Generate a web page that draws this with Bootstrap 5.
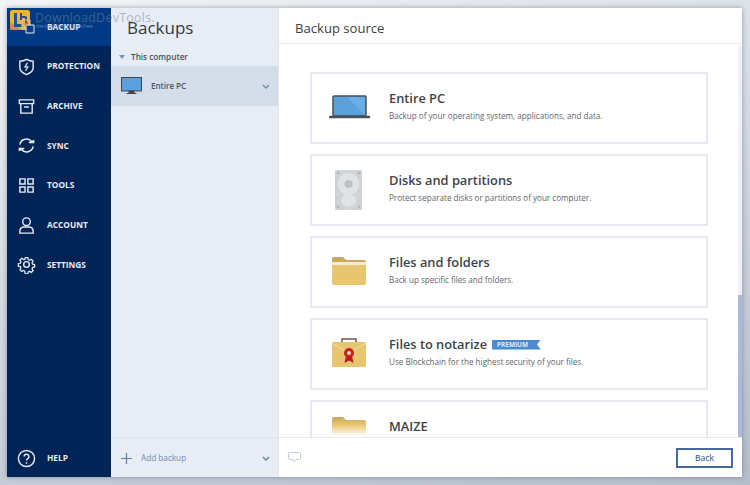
<!DOCTYPE html>
<html lang="en">
<head>
<meta charset="utf-8">
<title>Backups</title>
<link href="https://cdn.jsdelivr.net/npm/bootstrap@5.3.0/dist/css/bootstrap.min.css" rel="stylesheet">
<style>
html,body{width:750px;height:485px;overflow:hidden}
body{font-family:"Open Sans","Noto Sans",sans-serif;background:linear-gradient(165deg,#f3f4f5 0,#dde2e9 30%,#b4bdcb 100%);padding:8px 8px 8px 7px;color:#3b4148}
.win{height:469px;box-shadow:0 0 5px rgba(60,70,90,.45);background:#fff}
.side{width:104px;background:#012456;flex:none}
.side-item{height:39.7px;flex:none;color:#e8eef6;font-size:8.3px;font-weight:700;padding:1px 0 0 10px;gap:11px}
.side-item svg{width:19px;height:19px;flex:none;fill:none;stroke:#e6ecf4;stroke-width:1.5}
.side-active{background:#003a84;height:38px}
.side-help{padding-top:3px}
.mid{width:168px;background:#e8edf5;flex:none;border-right:1px solid #dfe4ec}
.mid-title{font-size:17px;font-weight:400;color:#333a42;height:37px;padding:7px 0 0 16px;line-height:26px;flex:none}
.sect{font-size:8.2px;font-weight:600;height:21px;flex:none;padding:3px 0 0 8px;gap:6px;color:#4a5058}
.tri{width:0;height:0;border-left:3px solid transparent;border-right:3px solid transparent;border-top:4px solid #7d93b3}
.pc-row{height:40px;flex:none;background:#d4deeb;padding:0 8px 0 10px;font-size:8px;font-weight:600;color:#4d545c}
.pc-label{margin-left:9px}
.add-row{height:40px;flex:none;border-top:1px solid #dfe4ec;padding:1px 8px 0 10px;font-size:8.2px;color:#6f8cb2}
.add-label{margin-left:9px}
.main-head{height:36px;flex:none;padding:7px 0 0 16px;font-size:13.1px;font-weight:500;color:#3a4047;border-bottom:1px solid #e6e9ee}
.pane{min-height:0;overflow:hidden;padding:28px 34px 0 31px}
.tile{height:72px;border:2px solid #e5eaf2;margin-bottom:10px;padding-left:17px;flex:none}
.tile-ico{width:42px;height:48px;flex:none;margin-right:18px}
.tile-txt{margin-bottom:4px}
.tile-name{font-size:12.8px;font-weight:600;color:#3d434a;line-height:17px}
.tile-desc{font-size:8.1px;color:#5f656c;line-height:12px;margin-top:3px}
.prem{font-size:6.4px;font-weight:700;color:#dfeaf8;background:#4a8bd0;height:10px;line-height:10px;padding:0 13px 0 5px;margin-left:5px;clip-path:polygon(0 0,100% 0,calc(100% - 4px) 50%,100% 100%,0 100%)}
.main-foot{height:40px;flex:none;border-top:1px solid #e6e9ee;padding:0 9px;background:#fff;position:relative}
.back-btn{width:57px;height:20px;padding:0;border:2px solid #44699a;border-radius:0;font-size:8.3px;font-weight:600;line-height:15px;color:#55759f;background:#fff}
.scroll-track{position:absolute;right:0;top:38px;bottom:40px;width:4px;background:#eef1f6}
.scroll-thumb{position:absolute;left:0;bottom:0;width:100%;height:142px;background:#a9bbd8}
.mark-logo{position:absolute;left:10px;top:10px;width:20px;height:20px}
.mark-text{position:absolute;left:35px;top:11px;font-size:12.4px;letter-spacing:.3px;color:rgba(120,130,145,.55);line-height:14px}
.mark-sub{position:absolute;left:36px;top:23px;font-size:5.2px;color:rgba(150,165,190,.7);line-height:7px}
.sq{position:absolute;left:21px;top:19px;width:14px;height:15px}
</style>
</head>
<body>
<div class="win d-flex position-relative">
  <nav class="side d-flex flex-column">
    <div class="side-item side-active d-flex align-items-center"><svg viewBox="0 0 20 20"></svg><span>BACKUP</span></div>
    <div class="side-item d-flex align-items-center"><svg viewBox="0 0 20 20"><path d="M3 4.500q3.500 0 7-2 3.500 2 7 2v7q0 4-7 7-7-3-7-7z"/><path d="M11 6l-2.600 4.400h3L9 14.500" stroke-width="1.300"/></svg><span>PROTECTION</span></div>
    <div class="side-item d-flex align-items-center"><svg viewBox="0 0 20 20"><path d="M2.500 3h15v4h-15zM4 7v10h12V7M7.500 10.500h5"/></svg><span>ARCHIVE</span></div>
    <div class="side-item d-flex align-items-center"><svg viewBox="0 0 20 20"><path d="M3 9a7 7 0 0 1 12.500-3M17 11a7 7 0 0 1-12.500 3"/><path d="M12.500 7h5V5zM7.500 13h-5v2z" fill="#e6ecf4"/></svg><span>SYNC</span></div>
    <div class="side-item d-flex align-items-center"><svg viewBox="0 0 20 20"><path d="M3 3h5.500v5.500H3zM11.500 3H17v5.500h-5.500zM3 11.500h5.500V17H3zM11.500 11.500H17V17h-5.500z"/></svg><span>TOOLS</span></div>
    <div class="side-item d-flex align-items-center"><svg viewBox="0 0 20 20"><circle cx="10" cy="6" r="4"/><path d="M3 18v-2q0-4 4-4.500h6q4 .5 4 4.500v2z"/></svg><span>ACCOUNT</span></div>
    <div class="side-item d-flex align-items-center"><svg viewBox="0 0 20 20"><circle cx="10" cy="10" r="3"/><path d="M8.500 2h3l.5 2.300 1.700.7 2-1.200 2 2.100-1.200 2 .7 1.700 2.300.5v2.800l-2.300.5-.7 1.700 1.200 2-2 2.100-2-1.200-1.700.7-.5 2.300h-3L8 17.700 6.300 17l-2 1.200-2-2.100 1.200-2L2.800 12.400.5 11.900V9.100l2.300-.5.7-1.700-1.200-2 2-2.100 2 1.200L8 4.300z" transform="translate(1 1) scale(.9)"/></svg><span>SETTINGS</span></div>
    <div class="side-item side-help d-flex align-items-center mt-auto"><svg viewBox="0 0 20 20"><circle cx="10" cy="10" r="8.500"/><path d="M7.500 8a2.500 2.500 0 1 1 3.500 2.300q-1 .5-1 1.700M10 14v1.500"/></svg><span>HELP</span></div>
  </nav>
  <section class="mid d-flex flex-column">
    <div class="mid-title">Backups</div>
    <div class="sect d-flex align-items-center"><i class="tri"></i>This computer</div>
    <div class="pc-row d-flex align-items-center">
      <svg width="21" height="18" viewBox="0 0 21 18"><rect x=".5" y=".5" width="20" height="13.500" fill="#5aa0dc" stroke="#3f4650"/><path d="M8 14h5v2H8zM5.500 16.500h10" stroke="#3f4650" fill="#3f4650"/></svg>
      <span class="pc-label">Entire PC</span>
      <svg class="ms-auto" width="8" height="5" viewBox="0 0 8 5"><path d="M1 1l3 3 3-3" fill="none" stroke="#6d8ab3" stroke-width="1.300"/></svg>
    </div>
    <div class="add-row d-flex align-items-center mt-auto">
      <svg width="11" height="11" viewBox="0 0 11 11"><path d="M5.500 0v11M0 5.500h11" stroke="#5b7eaa" stroke-width="1.200"/></svg>
      <span class="add-label">Add backup</span>
      <svg class="ms-auto" width="8" height="5" viewBox="0 0 8 5"><path d="M1 1l3 3 3-3" fill="none" stroke="#5b7eaa" stroke-width="1.300"/></svg>
    </div>
  </section>
  <main class="flex-grow-1 d-flex flex-column position-relative" style="min-width:0">
    <div class="main-head d-flex align-items-center">Backup source</div>
    <div class="pane flex-grow-1 d-flex flex-column">
      <div class="tile d-flex align-items-center">
        <svg class="tile-ico" viewBox="0 0 42 48"><rect x="4" y="12" width="33" height="20" rx="1" fill="#5aa0dc" stroke="#4a5058" stroke-width="1.500"/><path d="M18 13h18v18z" fill="#6aaee6"/><path d="M1 33h39" stroke="#4a5058" stroke-width="2.500" stroke-linecap="round"/></svg>
        <div class="tile-txt"><div class="tile-name">Entire PC</div><div class="tile-desc">Backup of your operating system, applications, and data.</div></div>
      </div>
      <div class="tile d-flex align-items-center">
        <svg class="tile-ico" viewBox="0 0 42 48"><rect x="6" y="4" width="27" height="40" rx="1" fill="#cfd2d6"/><circle cx="19.500" cy="18" r="11" fill="#e0e2e5"/><circle cx="19.500" cy="18" r="4" fill="#bcc0c5"/><path d="M19.500 28q7 1 8 6t-8 7q-8-1-7-7t7-6z" fill="#e0e2e5"/><circle cx="9" cy="7" r="1.500" fill="#b5b9be"/><circle cx="30" cy="7" r="1.500" fill="#b5b9be"/><circle cx="9" cy="41" r="1.500" fill="#b5b9be"/><circle cx="30" cy="41" r="1.500" fill="#b5b9be"/></svg>
        <div class="tile-txt"><div class="tile-name">Disks and partitions</div><div class="tile-desc">Protect separate disks or partitions of your computer.</div></div>
      </div>
      <div class="tile d-flex align-items-center">
        <svg class="tile-ico" viewBox="0 0 42 48"><path d="M3 16v-5q0-2 2-2h9l3 3h18q2 0 2 2v2z" fill="#c9a75c"/><rect x="3" y="14" width="34" height="3" fill="#f1ead6"/><path d="M3 17h34v18q0 2-2 2H5q-2 0-2-2z" fill="#e8c56f"/></svg>
        <div class="tile-txt"><div class="tile-name">Files and folders</div><div class="tile-desc">Back up specific files and folders.</div></div>
      </div>
      <div class="tile d-flex align-items-center">
        <svg class="tile-ico" viewBox="0 0 42 48"><path d="M13 12V9h14v3" fill="none" stroke="#6b5a48" stroke-width="1.500"/><rect x="3" y="12" width="34" height="25" rx="1" fill="#e8c56f"/><path d="M3 13l17 10 17-10" fill="none" stroke="#f5e1a8"/><path d="M17 26l-1.500 7 4.500-2.500 4.500 2.500L23 26z" fill="#b91c1c"/><circle cx="20" cy="23" r="5" fill="#c8201f"/><circle cx="20" cy="23" r="2" fill="#f2d0c8"/></svg>
        <div class="tile-txt"><div class="d-flex align-items-center"><span class="tile-name">Files to notarize</span><span class="prem">PREMIUM</span></div><div class="tile-desc">Use Blockchain for the highest security of your files.</div></div>
      </div>
      <div class="tile d-flex align-items-center">
        <svg class="tile-ico" viewBox="0 0 42 48"><defs><linearGradient id="fade" gradientUnits="userSpaceOnUse" x1="0" y1="5" x2="0" y2="24"><stop offset="0" stop-color="#c9a75c"/><stop offset=".4" stop-color="#e8c56f"/><stop offset="1" stop-color="#fff"/></linearGradient></defs><path d="M3 33V7q0-2 2-2h9l3 3h18q2 0 2 2v23z" fill="url(#fade)"/></svg>
        <div class="tile-txt"><div class="tile-name">MAIZE</div><div class="tile-desc">&nbsp;</div></div>
      </div>
    </div>
    <div class="main-foot d-flex align-items-center justify-content-between">
      <svg width="13" height="11" viewBox="0 0 13 11"><path d="M1.500.5h10q1 0 1 1v5q0 1-1 1H8l-2 2.500-1-2.500H1.500q-1 0-1-1v-5q0-1 1-1z" fill="none" stroke="#c2cbd8"/></svg>
      <button type="button" class="btn back-btn">Back</button>
    </div>
    <div class="scroll-track"><div class="scroll-thumb"></div></div>
  </main>
</div>
<svg class="mark-logo" viewBox="0 0 20 20"><rect width="20" height="20" rx="2.500" fill="#eab62e"/><path d="M0 12L12 20H2.500Q0 20 0 17.500z" fill="#d9902b"/><path d="M4 3h3v11h5v3H4z" fill="#1f4f9c"/><path d="M10 3h2v3h3q2 0 2 2v4h-2V8h-3v2h-2z" fill="#1f4f9c"/><rect x="15" y="12" width="3" height="5" fill="#d2553a"/></svg>
<svg class="sq" viewBox="0 0 14 15"><path d="M1 1h8v8H1z" fill="none" stroke="#d9c8b8"/><path d="M5 6h8v8H5z" fill="#0a3e88" stroke="#e8eef6"/></svg>
<div class="mark-text">DownloadDevTools.</div>
<div class="mark-sub">devtoolsdownloadsfree</div>
</body>
</html>
